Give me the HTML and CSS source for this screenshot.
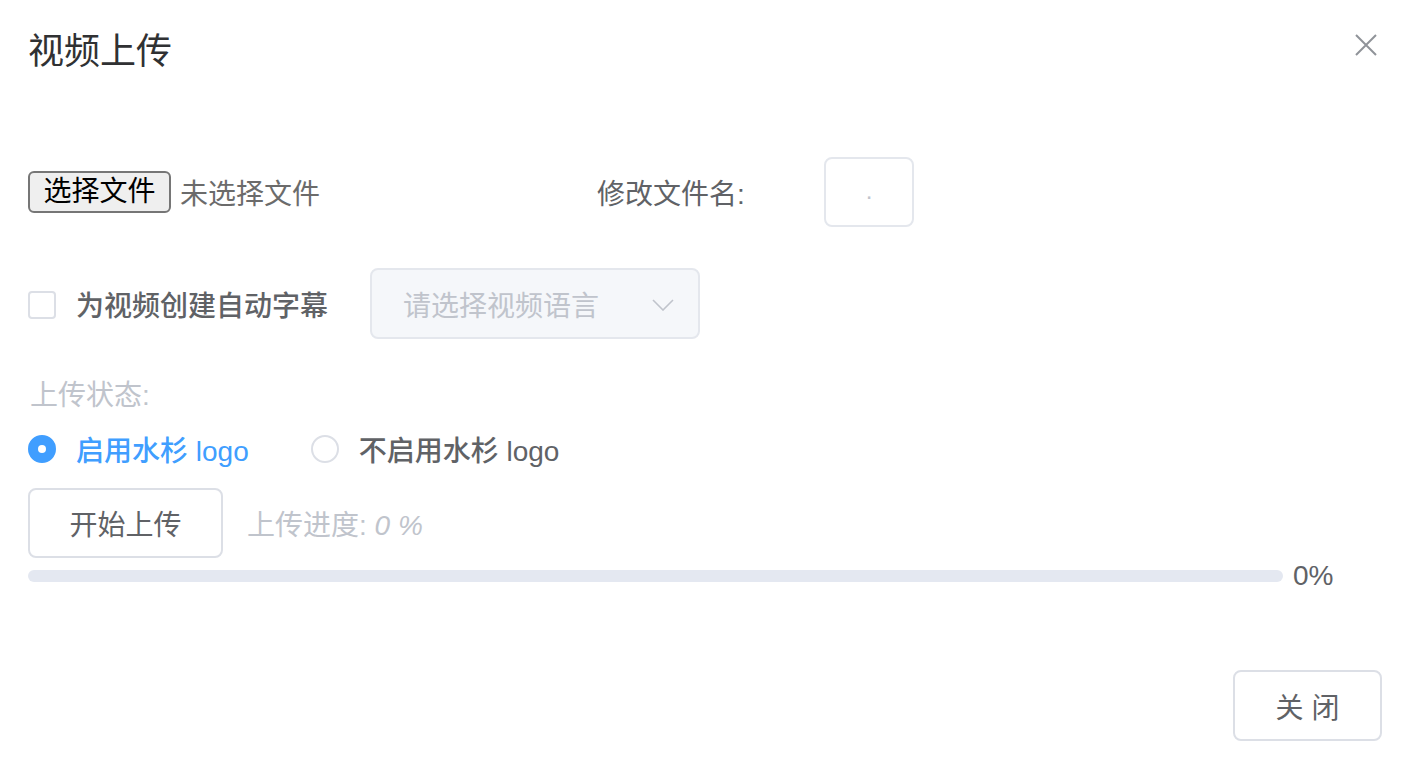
FILE: index.html
```html
<!DOCTYPE html>
<html lang="zh-CN">
<head>
<meta charset="utf-8">
<title>视频上传</title>
<link rel="stylesheet" href="styles.css">
</head>
<body>
<div class="dialog">
  <div class="dialog-header">
    <span class="dialog-title">视频上传</span>
    <button class="dialog-close" aria-label="Close">
      <svg width="22" height="22" viewBox="0 0 22 22"><path d="M1 1 L21 21 M21 1 L1 21" stroke="#909399" stroke-width="2" fill="none"/></svg>
    </button>
  </div>
  <div class="dialog-body">
    <div class="row row-file">
      <div class="file-group">
        <span class="file-btn">选择文件</span>
        <span class="file-name">未选择文件</span>
      </div>
      <label class="field-label">修改文件名:</label>
      <div class="name-input">.</div>
    </div>
    <div class="row row-subtitle">
      <span class="checkbox"></span>
      <span class="check-label">为视频创建自动字幕</span>
      <div class="select">
        <span class="select-placeholder">请选择视频语言</span>
        <svg class="select-arrow" width="22" height="12" viewBox="0 0 22 12"><path d="M1 1 L11 11 L21 1" stroke="#c0c4cc" stroke-width="1.6" fill="none"/></svg>
      </div>
    </div>
    <div class="status-label">上传状态:</div>
    <div class="row row-radio">
      <label class="radio radio-checked"><span class="radio-dot"></span><span class="radio-label">启用水杉 logo</span></label>
      <label class="radio"><span class="radio-dot"></span><span class="radio-label">不启用水杉 logo</span></label>
    </div>
    <div class="row row-upload">
      <span class="btn btn-upload">开始上传</span>
      <span class="progress-text">上传进度: <em>0 %</em></span>
    </div>
    <div class="row row-progress">
      <div class="progress-bar"></div>
      <span class="progress-percent">0%</span>
    </div>
  </div>
  <div class="dialog-footer">
    <span class="btn btn-close">关 闭</span>
  </div>
</div>
</body>
</html>
```

FILE: styles.css
```css
* { box-sizing: border-box; }
html, body { margin: 0; padding: 0; background: #fff; }
body {
  font-family: "Liberation Sans", "Noto Sans CJK SC", sans-serif;
  color: #606266;
  font-size: 28px;
}
.dialog { width: 1416px; height: 768px; }
.dialog-header {
  padding: 28px 28px 0;
  height: 76px;
  display: flex;
  justify-content: space-between;
  align-items: flex-start;
}
.dialog-title {
  font-size: 36px;
  line-height: 48px;
  color: #303133;
}
.dialog-close {
  border: 0;
  background: none;
  padding: 0;
  margin-top: 6px;
  margin-right: 11px;
  width: 22px;
  height: 22px;
  display: block;
}
.dialog-close svg { display: block; }
.dialog-body { padding: 0 28px; }
.row { display: flex; align-items: center; }
.row-file { margin-top: 81px; height: 70px; }
.file-group { width: 569px; display: flex; align-items: center; }
.file-btn {
  width: 143px;
  height: 42px;
  border: 2px solid #767676;
  border-radius: 6px;
  background: #efefef;
  color: #000;
  font-size: 28px;
  line-height: 38px;
  text-align: center;
}
.file-name { margin-left: 9px; font-size: 28px; color: #6b6b6b; }
.field-label { width: 227px; font-size: 28px; color: #606266; }
.name-input {
  width: 90px;
  height: 70px;
  border: 2px solid #e4e7ed;
  border-radius: 8px;
  text-align: center;
  line-height: 64px;
  color: #c0c4cc;
  font-size: 24px;
}
.row-subtitle { margin-top: 41px; height: 71px; }
.checkbox {
  width: 28px;
  height: 28px;
  border: 2px solid #dcdfe6;
  border-radius: 4px;
  margin-right: 20px;
  margin-top: 2px;
}
.check-label { font-weight: 500; color: #606266; margin-right: 42px; }
.select {
  width: 330px;
  height: 71px;
  background: #f5f7fa;
  border: 2px solid #e4e7ed;
  border-radius: 8px;
  display: flex;
  align-items: center;
  justify-content: space-between;
  padding: 0 24px 0 31px;
}
.select-placeholder { color: #c0c4cc; }
.select-arrow { display: block; margin-top: 2px; }
.status-label {
  margin-top: 37px;
  line-height: 40px;
  color: #c0c4cc;
  padding-left: 2px;
}
.row-radio { margin-top: 13px; height: 40px; }
.radio { display: flex; align-items: center; margin-right: 62px; font-weight: 500; }
.radio-dot {
  width: 28px;
  height: 28px;
  border: 2px solid #dcdfe6;
  border-radius: 50%;
  margin-right: 20px;
  position: relative;
}
.radio-checked .radio-dot { background: #409eff; border-color: #409eff; }
.radio-checked .radio-dot::after {
  content: "";
  position: absolute;
  left: 50%;
  top: 50%;
  width: 8px;
  height: 8px;
  margin: -4px 0 0 -4px;
  border-radius: 50%;
  background: #fff;
}
.radio-checked .radio-label { color: #409eff; }
.radio-label { color: #606266; }
.row-upload { margin-top: 19px; height: 70px; }
.btn {
  display: inline-flex;
  align-items: center;
  justify-content: center;
  border: 2px solid #dcdfe6;
  border-radius: 8px;
  background: #fff;
  color: #606266;
}
.btn-upload { width: 195px; height: 70px; }
.progress-text { margin-left: 24px; color: #c0c4cc; }
.progress-text em { font-style: italic; }
.row-progress { margin-top: 6px; height: 24px; }
.progress-bar {
  width: 1255px;
  height: 12px;
  border-radius: 6px;
  background: #e4e8f1;
}
.progress-percent { margin-left: 10px; color: #606266; }
.dialog-footer {
  margin-top: 82px;
  padding-right: 34px;
  display: flex;
  justify-content: flex-end;
}
.btn-close { width: 149px; height: 71px; }
```
